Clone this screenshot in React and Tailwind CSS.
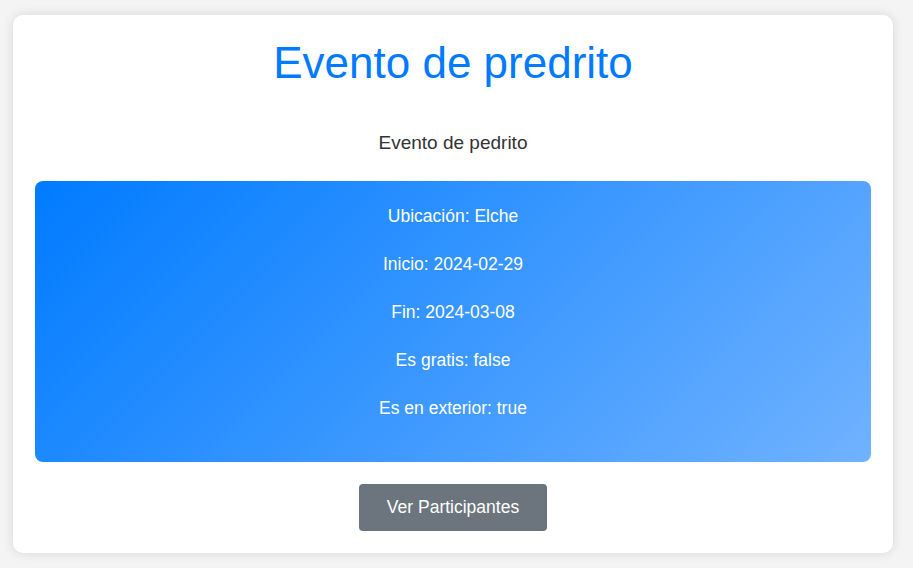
export default function App() {
  const info = [
    'Ubicación: Elche',
    'Inicio: 2024-02-29',
    'Fin: 2024-03-08',
    'Es gratis: false',
    'Es en exterior: true',
  ];

  return (
    <div className="min-h-[568px] bg-[#f4f4f4] pt-[15px] pb-[14px] font-['Liberation_Sans',Arial,sans-serif]">
      <div className="ml-[13px] w-[880px] rounded-[10px] bg-white p-[22px] text-center shadow-[0_0_12px_rgba(0,0,0,0.12)]">
        <h1 className="text-[44px] leading-[52px] text-[#007bff]">Evento de predrito</h1>
        <p className="mt-[43px] text-[19px] leading-[22px] text-[#333]">Evento de pedrito</p>

        <div className="mt-[27px] flex h-[281px] flex-col items-center gap-[27px] rounded-[8px] bg-[linear-gradient(135deg,#007bff,#70b2ff)] pt-[25px] text-[17.5px] leading-[21px] text-white">
          {info.map((line) => (
            <p key={line}>{line}</p>
          ))}
        </div>

        <button className="mx-auto mt-[22px] flex h-[47px] w-[188px] items-center justify-center rounded-[4px] bg-[#6c757d] text-[17.5px] text-white">
          Ver Participantes
        </button>
      </div>
    </div>
  );
}
